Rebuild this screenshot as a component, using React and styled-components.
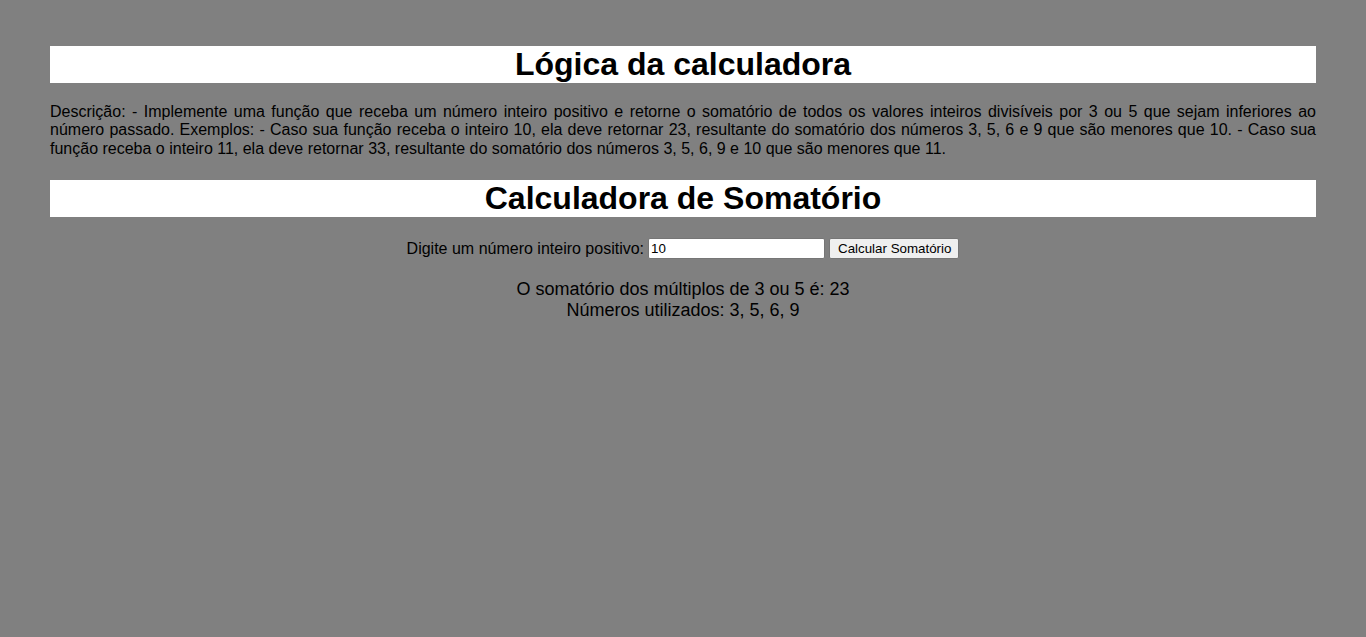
import React, { useState } from 'react';
import styled, { createGlobalStyle } from 'styled-components';

const GlobalStyle = createGlobalStyle`
  html, body {
    margin: 0;
    padding: 0;
    background: #808080;
  }
  body {
    font-family: "Liberation Sans", Arial, sans-serif;
    color: #000;
  }
`;

function somar(n) {
  const usados = [];
  for (let i = 1; i < n; i++) {
    if (i % 3 === 0 || i % 5 === 0) usados.push(i);
  }
  return { total: usados.reduce((a, b) => a + b, 0), usados };
}

export default function App() {
  const [valor, setValor] = useState('10');
  const [resultado, setResultado] = useState(somar(10));

  const calcular = () => {
    const n = parseInt(valor, 10);
    if (n > 0) setResultado(somar(n));
  };

  return (
    <Page>
      <GlobalStyle />
      <Title>Lógica da calculadora</Title>
      <Description>
        Descrição: - Implemente uma função que receba um número inteiro positivo e retorne o
        somatório de todos os valores inteiros divisíveis por 3 ou 5 que sejam inferiores ao
        número passado. Exemplos: - Caso sua função receba o inteiro 10, ela deve retornar 23,
        resultante do somatório dos números 3, 5, 6 e 9 que são menores que 10. - Caso sua função
        receba o inteiro 11, ela deve retornar 33, resultante do somatório dos números 3, 5, 6, 9
        e 10 que são menores que 11.
      </Description>
      <Title>Calculadora de Somatório</Title>
      <FormRow>
        <Label htmlFor="numero">Digite um número inteiro positivo:</Label>
        <NumberInput
          id="numero"
          type="text"
          value={valor}
          onChange={e => setValor(e.target.value)}
        />
        <Button onClick={calcular}>Calcular Somatório</Button>
      </FormRow>
      <Result>
        <div>O somatório dos múltiplos de 3 ou 5 é: {resultado.total}</div>
        <div>Números utilizados: {resultado.usados.join(', ')}</div>
      </Result>
    </Page>
  );
}

const Page = styled.div`
  padding: 46px 50px 0;
`;

const Title = styled.h1`
  margin: 0;
  background: #ffffff;
  text-align: center;
  font-size: 32px;
  font-weight: bold;
  line-height: 37px;
`;

const Description = styled.p`
  margin: 20px 0 22px;
  font-size: 16px;
  line-height: 18.4px;
  text-align: justify;
`;

const FormRow = styled.div`
  margin-top: 21px;
  display: flex;
  justify-content: center;
  align-items: center;
  gap: 4px;
  font-size: 16px;
`;

const Label = styled.label`
  font-size: 16px;
`;

const NumberInput = styled.input`
  box-sizing: border-box;
  width: 177px;
  height: 21px;
  padding: 1px 2px;
  border: 1px solid #767676;
  border-radius: 2px;
  background: #ffffff;
  font-family: "Liberation Sans", Arial, sans-serif;
  font-size: 13.33px;
  color: #000;
  outline: none;
`;

const Button = styled.button`
  box-sizing: border-box;
  height: 21px;
  padding: 1px 7px 1px 8px;
  border: 1px solid #767676;
  border-radius: 2px;
  background: #efefef;
  font-family: "Liberation Sans", Arial, sans-serif;
  font-size: 13.33px;
  color: #000;
  cursor: pointer;
`;

const Result = styled.div`
  margin-top: 20px;
  text-align: center;
  font-size: 18px;
  line-height: 21px;
`;
